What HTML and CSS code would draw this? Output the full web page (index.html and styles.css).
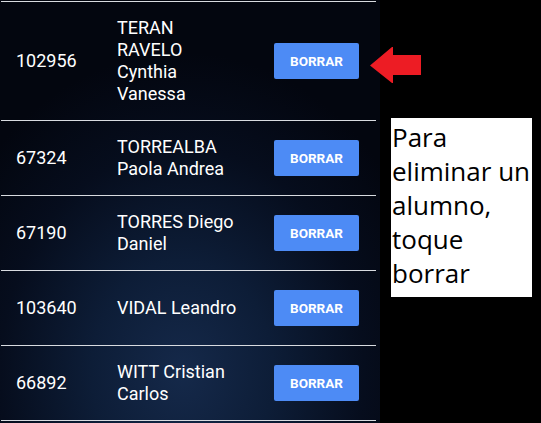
FILE: index.html
```html
<!DOCTYPE html>
<html lang="es">
<head>
<meta charset="utf-8">
<title>Alumnos</title>
<link rel="stylesheet" href="styles.css">
</head>
<body>
<div class="page">
  <div class="panel">
    <div class="list">
      <div class="row">
        <div class="id">102956</div>
        <div class="name">TERAN RAVELO Cynthia Vanessa</div>
        <button class="btn">BORRAR</button>
      </div>
      <div class="row">
        <div class="id">67324</div>
        <div class="name">TORREALBA Paola Andrea</div>
        <button class="btn">BORRAR</button>
      </div>
      <div class="row">
        <div class="id">67190</div>
        <div class="name">TORRES Diego Daniel</div>
        <button class="btn">BORRAR</button>
      </div>
      <div class="row">
        <div class="id">103640</div>
        <div class="name">VIDAL Leandro</div>
        <button class="btn">BORRAR</button>
      </div>
      <div class="row">
        <div class="id">66892</div>
        <div class="name">WITT Cristian Carlos</div>
        <button class="btn">BORRAR</button>
      </div>
    </div>
  </div>
  <svg class="arrow" width="56" height="40" viewBox="0 0 56 40">
    <polygon points="2,20.5 24,2 25,2 25,10 53,10 53,30 25,30 25,38 24,38" fill="#ed1c24"/>
  </svg>
  <div class="note">Para eliminar un alumno, toque borrar</div>
</div>
</body>
</html>
```
FILE: styles.css
```css
* { box-sizing: border-box; }
html, body { margin: 0; padding: 0; background: #000; }
.page {
  position: relative;
  width: 541px;
  height: 423px;
  overflow: hidden;
  background: #000;
}
.panel {
  width: 380px;
  height: 423px;
  padding-top: 1px;
  padding-left: 1px;
  background:
    radial-gradient(ellipse 260px 320px at 48% 88%, #15294a 0%, #0d1d37 35%, #060d1d 70%, #03060f 100%);
  font-family: Roboto, "Noto Sans", sans-serif;
  color: #fff;
}
.list {
  width: 375px;
  border-top: 1px solid #d8dbe0;
}
.row {
  display: grid;
  grid-template-columns: 101px 157px 85px;
  align-items: center;
  min-height: 75px;
  padding: 15px 0 15px 15px;
  border-bottom: 1px solid #d8dbe0;
  font-size: 18px;
  line-height: 22px;
}
.name { width: 122px; }
.btn {
  width: 85px;
  height: 36px;
  border: none;
  border-radius: 2px;
  background: #4d8bf5;
  color: #fff;
  font-family: Roboto, sans-serif;
  font-weight: 700;
  font-size: 13.5px;
  padding: 0;
}
.arrow {
  position: absolute;
  left: 368px;
  top: 45px;
}
.note {
  position: absolute;
  left: 391px;
  top: 118px;
  width: 141px;
  height: 179px;
  background: #fff;
  color: #000;
  font-family: "Open Sans", "Noto Sans", sans-serif;
  font-size: 26px;
  line-height: 34px;
  padding: 2px 0 0 1px;
}
```
